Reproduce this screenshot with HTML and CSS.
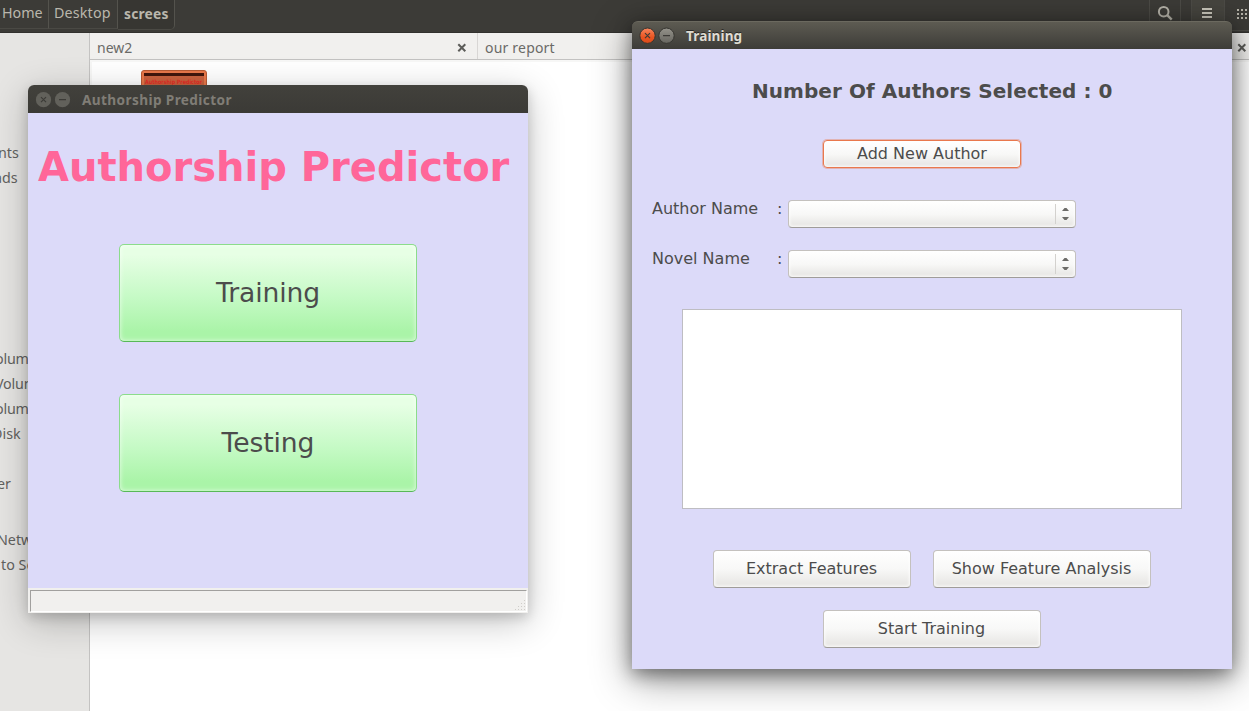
FILE: index.html
```
<!DOCTYPE html>
<html lang="en">
<head>
<meta charset="utf-8">
<title>Authorship Predictor</title>
<link rel="stylesheet" href="styles.css">
</head>
<body>
<div class="desktop">
  <header class="toolbar">
    <nav class="path">
      <span class="crumb home">Home</span>
      <span class="crumb desk">Desktop</span>
      <span class="crumb current">screes</span>
    </nav>
    <div class="tools">
      <span class="tool search"><svg width="18" height="18" viewBox="0 0 18 18"><circle cx="6.7" cy="6.7" r="4.8" fill="none" stroke="#b5b2a8" stroke-width="2"/><path d="M10.2 10.2L14.7 14.7" stroke="#b5b2a8" stroke-width="2.4"/></svg></span>
      <span class="tool list"><svg width="10" height="10" viewBox="0 0 10 10"><path d="M0 1h10M0 5h10M0 9h10" stroke="#c9c6bb" stroke-width="2"/></svg></span>
      <span class="tool grid"><svg width="13" height="10" viewBox="0 0 13 10"><path d="M0 1h14M0 5h14M0 9h14" stroke="#b5b2a8" stroke-width="2" stroke-dasharray="2 2"/></svg></span>
    </div>
  </header>
  <div class="manager">
    <aside class="places">
      <div class="group first"><span class="place docs">nts</span><span class="place downloads">ads</span></div>
      <div class="group devices"><span class="place vol">olume</span><span class="place vol">Volume</span><span class="place vol">olume</span><span class="place disk">Disk</span></div>
      <div class="group computer"><span class="place comp">er</span></div>
      <div class="group network"><span class="place net">Netw</span><span class="place server">to Se</span></div>
    </aside>
    <main class="files">
      <div class="tabs">
        <div class="tab one"><span>new2</span><svg class="x" width="10" height="10" viewBox="0 0 10 10"><path d="M1.3 1.3l7 7M8.3 1.3l-7 7" stroke="#5c5c59" stroke-width="2"/></svg></div>
        <div class="tab two"><span>our report</span><svg class="x" width="10" height="10" viewBox="0 0 10 10"><path d="M1.3 1.3l7 7M8.3 1.3l-7 7" stroke="#5c5c59" stroke-width="2"/></svg></div>
      </div>
      <div class="icons">
        <div class="thumb"><div class="thumb-page"><div class="thumb-bar"></div><svg width="60" height="11" viewBox="0 0 60 11"><text x="1" y="8" textLength="57" lengthAdjust="spacingAndGlyphs" class="thumb-text">Authorship Predictor</text></svg></div></div>
      </div>
    </main>
  </div>

  <section class="window predictor">
    <div class="titlebar">
      <svg class="controls" width="36" height="18" viewBox="0 0 36 18"><circle cx="8.5" cy="8.7" r="7.6" fill="#62615b"/><circle cx="27.5" cy="8.7" r="7.6" fill="#62615b"/><path d="M6 6.2l5 5M11 6.2l-5 5M24 8.7h7" stroke="#3c3b37" stroke-width="1.2"/></svg>
      <span class="title">Authorship Predictor</span>
    </div>
    <div class="predictor-body">
      <h1>Authorship Predictor</h1>
      <button class="green">Training</button>
      <button class="green">Testing</button>
    </div>
    <div class="status"><div class="status-inner"><svg width="12" height="12" viewBox="0 0 12 12"><path d="M10 1.5h1M7 4.5h1M10 4.5h1M4 7.5h1M7 7.5h1M10 7.5h1M1 10.5h1M4 10.5h1M7 10.5h1M10 10.5h1" stroke="#cfcdc9"/></svg></div></div>
  </section>

  <section class="window training">
    <div class="titlebar">
      <svg class="controls" width="36" height="18" viewBox="0 0 36 18"><defs><linearGradient id="o" x2="0" y2="1"><stop stop-color="#f7875f"/><stop offset=".6" stop-color="#e95420"/><stop offset="1" stop-color="#dc4c1c"/></linearGradient><linearGradient id="g" x2="0" y2="1"><stop stop-color="#95938b"/><stop offset="1" stop-color="#66655f"/></linearGradient></defs><circle cx="8.5" cy="8.7" r="7.7" fill="url(#o)" stroke="#35342f"/><circle cx="27.5" cy="8.7" r="7.7" fill="url(#g)" stroke="#35342f"/><path d="M6 6.2l5 5M11 6.2l-5 5M24 8.7h7" stroke="#3c3b37" stroke-width="1.2"/></svg>
      <span class="title">Training</span>
    </div>
    <div class="training-body">
      <h2>Number Of Authors Selected : 0</h2>
      <button class="btn add">Add New Author</button>
      <div class="field"><span class="label">Author Name</span><span class="colon">:</span><div class="combo"><svg width="20" height="20" viewBox="0 0 20 20"><path d="M.5 0v20" stroke="#d3d1ce"/><path d="M7 7h7l-2.5-3h-2zM7 13h7l-2.5 3h-2z" fill="#6c6b68"/></svg></div></div>
      <div class="field"><span class="label">Novel Name</span><span class="colon">:</span><div class="combo"><svg width="20" height="20" viewBox="0 0 20 20"><path d="M.5 0v20" stroke="#d3d1ce"/><path d="M7 7h7l-2.5-3h-2zM7 13h7l-2.5 3h-2z" fill="#6c6b68"/></svg></div></div>
      <div class="output"></div>
      <div class="actions"><button class="btn extract">Extract Features</button><button class="btn wide">Show Feature Analysis</button></div>
      <button class="btn wide start">Start Training</button>
    </div>
  </section>
</div>
</body>
</html>
```
FILE: styles.css
```
* { box-sizing: border-box; }
body { margin: 0; font-family: "DejaVu Sans", sans-serif; color: #4c4c4c; }
button { font-family: inherit; color: inherit; margin: 0; padding: 0; }
svg { display: block; flex: none; }
.desktop { position: relative; width: 1249px; height: 711px; overflow: hidden; display: flex; flex-direction: column; }

/* file manager */
.toolbar { height: 33px; flex: none; display: flex; justify-content: space-between; background: #3c3b37; border-bottom: 1px solid #32312e; font: 15px "Noto Sans", sans-serif; color: #bab7ad; }
.path { display: flex; height: 30px; }
.crumb { height: 29px; line-height: 26px; border-right: 1px solid #54534d; border-bottom: 1px solid #4a4944; white-space: nowrap; }
.home { width: 49px; padding-left: 2px; font-size: 14.3px; }
.desk { width: 69px; padding-left: 5px; font-size: 14.3px; letter-spacing: .15px; }
.current { width: 57px; height: 30px; line-height: 28px; padding-left: 6px; font-weight: bold; font-size: 13.8px; letter-spacing: .2px; border-radius: 0 0 5px 0; background: #373632; }
.tools { display: flex; height: 31px; }
.tool { border-left: 1px solid #4c4b46; }
.search { width: 32px; padding: 5px 0 0 7px; margin-right: 10px; border-right: 1px solid #4c4b46; }
.list { width: 33px; padding: 8px 0 0 10px; background: #46453f; }
.grid { width: 25px; padding: 9px 0 0 12px; border-bottom: 1px solid #4c4b46; }
.manager { flex: 1; display: flex; }
.places { width: 90px; flex: none; background: #e6e5e3; border-right: 1px solid #c4c3c2; font: 14.3px "Noto Sans", sans-serif; color: #62625f; overflow: hidden; padding-top: 107px; }
.group { display: flex; flex-direction: column; }
.place { height: 25px; line-height: 25px; white-space: nowrap; }
.devices { margin-top: 156px; }
.computer { margin-top: 25px; }
.network { margin-top: 31px; }
.docs { margin-left: -2px; }
.downloads { margin-left: -6px; }
.vol { margin-left: -5px; letter-spacing: -.2px; }
.disk { margin-left: -8px; }
.comp { margin-left: -3px; }
.net { margin-left: -3px; }
.server { margin-left: 1px; }
.files { flex: 1; background: #fff; min-width: 0; }
.tabs { height: 27px; display: flex; background: #f1f0ee; border-bottom: 1px solid #c3c2c1; font: 14px "Noto Sans", sans-serif; color: #6a6a67; }
.tab { display: flex; align-items: center; justify-content: space-between; line-height: 20px; padding: 1px 10px 0 7px; }
.tab span { margin-top: 2px; }
.x { margin-top: 3px; }
.one { width: 388px; border-right: 1px solid #d8d6d4; }
.two { flex: 1; padding: 1px 2px 0 7px; letter-spacing: .2px; }
.icons { border-top: 2px solid #f7f7f6; border-left: 2px solid #f7f7f6; padding: 8px 0 0 49px; }
.thumb { width: 66px; height: 50px; background: #e9784a; border: 1px solid #b75a34; border-radius: 3px; padding: 2px; }
.thumb-page { background: #c9623f; height: 40px; }
.thumb-bar { height: 3px; background: #41160c; }
.thumb-text { font: bold 6px "DejaVu Sans", sans-serif; fill: #e62e26; }

/* windows */
.window { position: absolute; display: flex; flex-direction: column; border-radius: 6px 6px 0 0; }
.titlebar { height: 28px; flex: none; display: flex; padding-left: 7px; border-radius: 6px 6px 0 0; font: bold 13.6px "Noto Sans", sans-serif; letter-spacing: .4px; }
.controls { margin-top: 6px; }
.title { line-height: 30px; margin-left: 11px; white-space: nowrap; }
.predictor { left: 28px; top: 85px; width: 500px; height: 528px; box-shadow: 0 9px 36px rgba(0,0,0,.24), 0 4px 12px rgba(0,0,0,.16); }
.predictor .titlebar { background: linear-gradient(#42413c, #3b3a36); color: #807d76; }
.predictor-body { flex: 1; background: #dcdaf9; padding: 29px 10px 0; }
h1 { margin: 0 0 52px; font-size: 40px; line-height: 50px; color: #ff6699; white-space: nowrap; }
.green { display: block; width: 298px; height: 98px; margin: 0 0 52px 81px; padding-bottom: 2px; font-size: 26.6px; letter-spacing: -.1px; border: 1px solid #8bdc8b; border-bottom-color: #58b858; border-radius: 5px; background: linear-gradient(#e7ffe5 10%, #c5fac5 55%, #aaf4a8 90%); box-shadow: inset 0 0 5px rgba(255,255,255,.7); }
.status { height: 25px; flex: none; padding: 2px 1px 1px 2px; background: #f1f0ee; }
.status-inner { height: 22px; border: 1px solid #a1a09e; border-right-color: #fff; border-bottom-color: #fff; display: flex; justify-content: flex-end; align-items: flex-end; }

.training { left: 632px; top: 21px; width: 600px; height: 648px; box-shadow: 0 10px 40px rgba(0,0,0,.42), 0 5px 18px rgba(0,0,0,.42); }
.training .titlebar { background: linear-gradient(#5d5b52, #3d3c38); border-top: 1px solid #6b695f; color: #dfdbd2; text-shadow: 0 -1px #292825; letter-spacing: .1px; }
.training .controls { margin-top: 5px; }
.training .title { line-height: 28px; }
.training-body { flex: 1; background: #dcdaf9; padding: 30px 20px 0; }
h2 { margin: 0 0 37px 100px; font-size: 20px; line-height: 24px; letter-spacing: .06px; white-space: nowrap; }
.btn { display: block; height: 38px; font-size: 16px; padding: 0 1px 2px 0; border: 1px solid #c4c1be; border-bottom-color: #9f9c99; border-radius: 4px; background: linear-gradient(#fff, #f8f8f7 50%, #e9e8e6 90%); box-shadow: inset 0 0 3px 1px rgba(255,255,255,.75); }
.add { width: 198px; height: 28px; margin: 0 0 32px 171px; padding: 0 0 1px; border-color: #e9784d; box-shadow: 0 0 0 1px rgba(233,120,77,.4), inset 0 0 3px 1px rgba(255,255,255,.75); }
.field { height: 28px; margin-bottom: 22px; display: flex; font-size: 16px; line-height: 17px; }
.label { width: 125px; }
.colon { width: 11px; }
.combo { width: 288px; height: 28px; display: flex; justify-content: flex-end; padding: 3px 0; border: 1px solid #c4c1be; border-bottom-color: #9f9c99; border-radius: 4px; background: linear-gradient(#fff, #f8f8f7 50%, #e9e8e6 90%); box-shadow: inset 0 0 3px 1px rgba(255,255,255,.75); }
.output { width: 500px; height: 200px; margin: 31px 0 41px 30px; background: #fff; border: 1px solid #bebdc2; }
.actions { display: flex; gap: 22px; margin: 0 0 22px 61px; }
.extract { width: 198px; }
.wide { width: 218px; }
.start { margin-left: 171px; }
```
